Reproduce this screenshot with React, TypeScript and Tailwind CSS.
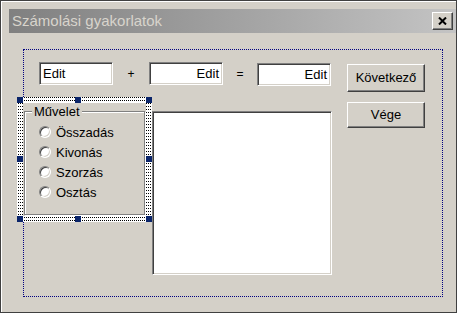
import React from 'react';

const sunken =
  'bg-white border border-t-[#808080] border-l-[#808080] border-r-white border-b-white shadow-[inset_1px_1px_0_#404040,inset_-1px_-1px_0_#d4d0c8]';
const raised =
  'bg-[#d4d0c8] border border-t-white border-l-white border-r-[#404040] border-b-[#404040] shadow-[inset_-1px_-1px_0_#808080]';

function Edit({ align }: { align: 'left' | 'right' }) {
  return (
    <div
      className={`${sunken} w-[74px] h-[23px] flex items-center px-[3px] text-[13px] text-black ${
        align === 'right' ? 'justify-end' : 'justify-start'
      }`}
    >
      Edit
    </div>
  );
}

function Radio({ label }: { label: string }) {
  return (
    <div className="h-[20px] flex items-center gap-[5px]">
      <span className="w-[12px] h-[12px] rounded-full bg-white border border-t-[#808080] border-l-[#808080] border-r-white border-b-white shadow-[inset_1px_1px_0_#404040,inset_-1px_-1px_0_#d4d0c8]" />
      <span className="text-[13px] text-black leading-none">{label}</span>
    </div>
  );
}

function Handle({ pos }: { pos: string }) {
  return <span className={`absolute w-[6px] h-[6px] bg-[#0a246a] ${pos}`} />;
}

export default function App() {
  return (
    <div className="w-[466px] h-[320px] bg-white font-['Liberation_Sans',Arial,sans-serif]">
      <div className="w-[457px] h-[313px] border border-[#404040] bg-[#d4d0c8]">
        <div className="h-full border-l border-t border-white pl-[7px] pt-[7px] flex flex-col">
          {/* title bar */}
          <div className="h-[24px] bg-gradient-to-r from-[#808080] to-[#c4c4c4] flex items-center justify-between pl-[3px] pr-[3px]">
            <span className="text-[15px] text-[#d8d4cc]">Számolási gyakorlatok</span>
            <button className={`${raised} w-[21px] h-[18px] flex items-center justify-center`}>
              <svg width="9" height="8" viewBox="0 0 9 8">
                <path d="M1 0.5 L8 7.5 M8 0.5 L1 7.5" stroke="#000" strokeWidth="2" />
              </svg>
            </button>
          </div>

          {/* panel */}
          <div className="relative ml-[14px] mt-[16px] w-[420px] h-[248px] border border-dotted border-[#000080] flex">
            <div className="flex flex-col">
              <div className="flex items-start mt-[12px] ml-[15px]">
                <Edit align="left" />
                <span className="w-[36px] h-[23px] flex items-center justify-center text-[12px]">+</span>
                <Edit align="right" />
                <span className="w-[34px] h-[23px] flex items-center justify-center text-[12px]">=</span>
                <div className="mt-px">
                  <Edit align="right" />
                </div>
              </div>

              <div className="flex items-start mt-[17px] -ml-px">
                {/* selected group box */}
                <div className="relative w-[123px] h-[113px]">
                  <div className="absolute -inset-[6px] bg-white bg-[conic-gradient(#000_25%,transparent_0)] bg-[length:2px_3px]">
                    <Handle pos="left-0 top-0" />
                    <Handle pos="left-[58px] top-0" />
                    <Handle pos="right-0 top-0" />
                    <Handle pos="left-0 top-[59px]" />
                    <Handle pos="right-0 top-[59px]" />
                    <Handle pos="left-0 bottom-0" />
                    <Handle pos="left-[58px] bottom-0" />
                    <Handle pos="right-0 bottom-0" />
                  </div>
                  <div className="absolute inset-0 bg-[#d4d0c8]">
                    <div className="absolute left-[1px] right-[1px] top-[8px] bottom-[1px] border border-[#808080] shadow-[inset_1px_1px_0_#fff,1px_1px_0_#fff]" />
                    <span className="absolute left-[9px] top-[1px] px-[2px] bg-[#d4d0c8] text-[13px] leading-[15px]">
                      Művelet
                    </span>
                    <div className="absolute left-[16px] top-[19px] flex flex-col">
                      <Radio label="Összadás" />
                      <Radio label="Kivonás" />
                      <Radio label="Szorzás" />
                      <Radio label="Osztás" />
                    </div>
                  </div>
                </div>

                {/* memo */}
                <div className={`${sunken} ml-[6px] mt-[8px] w-[180px] h-[164px]`} />
              </div>
            </div>

            <div className="ml-auto mr-[17px] mt-[14px] flex flex-col gap-[10px]">
              <button className={`${raised} w-[78px] h-[28px] text-[13px] text-black`}>Következő</button>
              <button className={`${raised} w-[78px] h-[26px] text-[13px] text-black`}>Vége</button>
            </div>
          </div>
        </div>
      </div>
    </div>
  );
}
